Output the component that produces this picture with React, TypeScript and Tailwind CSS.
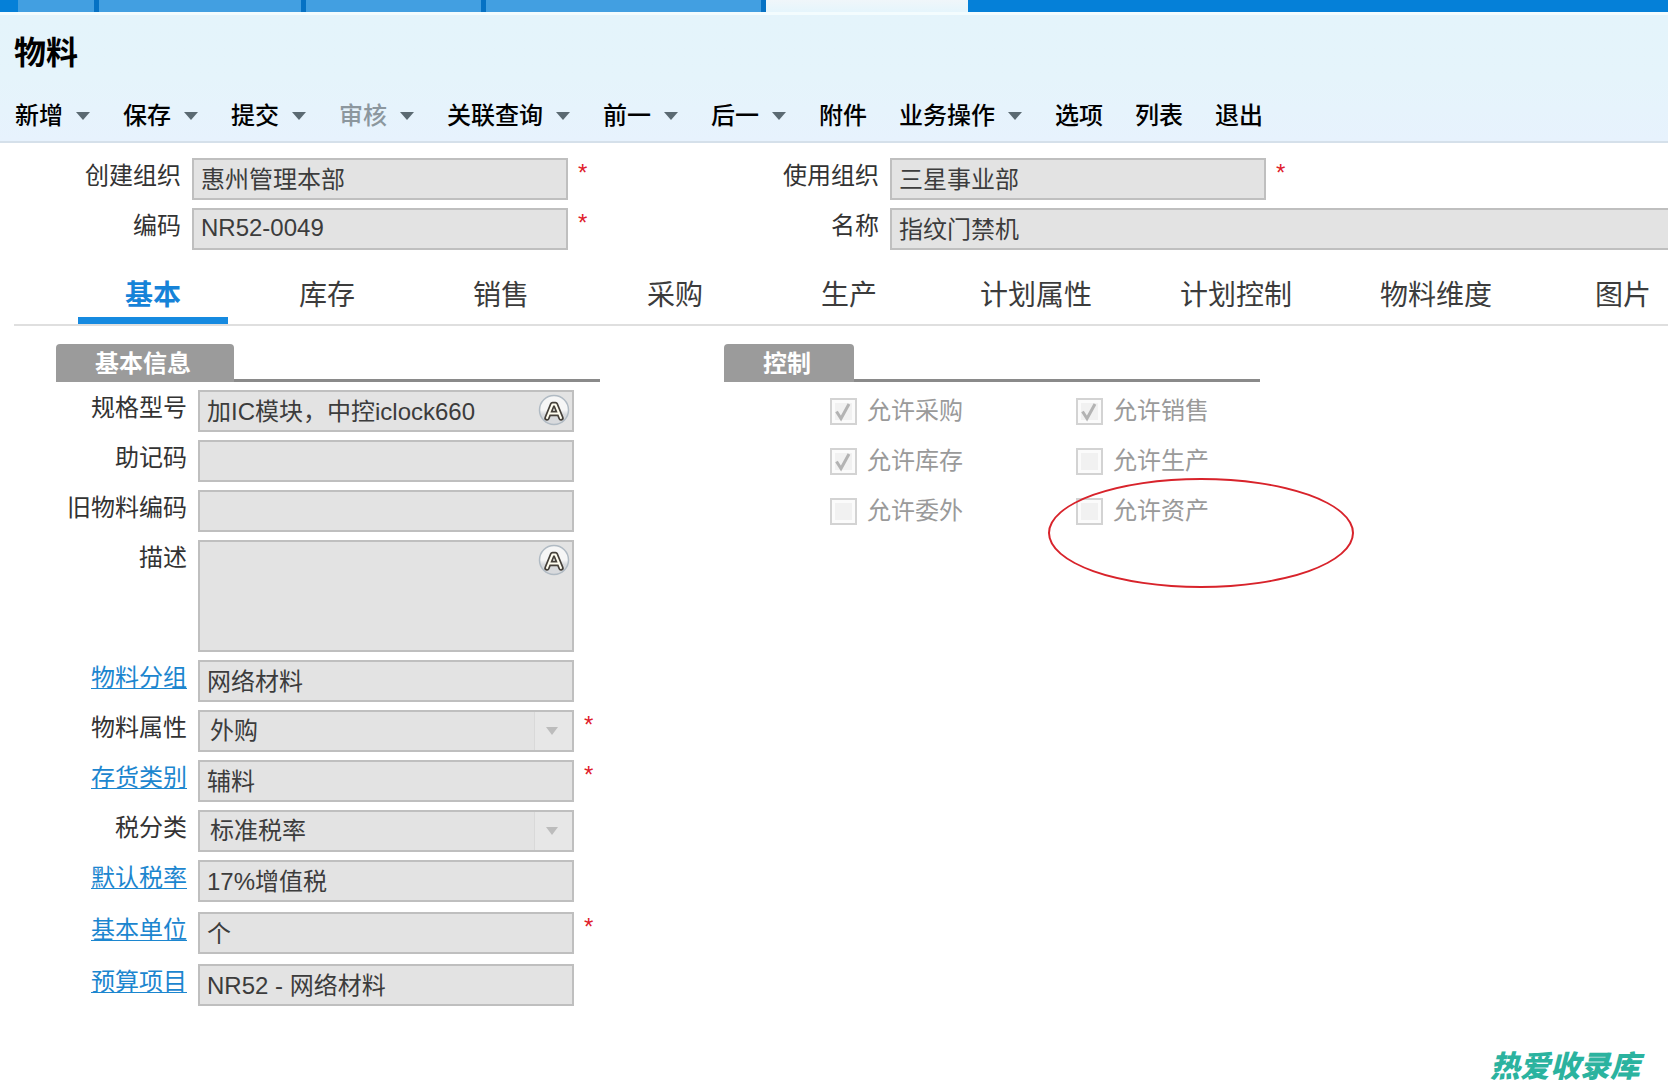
import type { ReactNode } from "react";

const FONT = "font-['Liberation_Sans','Noto_Sans_CJK_SC',sans-serif]";
const BOX = "w-full border-2 border-[#bfbfbf] bg-[#e3e3e3] text-2xl text-[#3c3c3c] outline-none";

type Action = { text: string; menu?: boolean; dim?: boolean };

const ACTIONS: Action[] = [
  { text: "新增", menu: true },
  { text: "保存", menu: true },
  { text: "提交", menu: true },
  { text: "审核", menu: true, dim: true },
  { text: "关联查询", menu: true },
  { text: "前一", menu: true },
  { text: "后一", menu: true },
  { text: "附件" },
  { text: "业务操作", menu: true },
  { text: "选项" },
  { text: "列表" },
  { text: "退出" },
];

const TABS = ["基本", "库存", "销售", "采购", "生产", "计划属性", "计划控制", "物料维度", "图片"];

const CHECKS = [
  { text: "允许采购", on: true },
  { text: "允许销售", on: true },
  { text: "允许库存", on: true },
  { text: "允许生产", on: false },
  { text: "允许委外", on: false },
  { text: "允许资产", on: false },
];

function WindowTabs() {
  return (
    <div className="flex h-3 bg-[#0580d8]">
      <div className="flex gap-[5px] bg-[#0672c4] pr-[5px]">
        <div className="-mr-[5px] w-[18px] bg-[#0580d8]" />
        <div className="w-[76px] bg-[#429fe1]" />
        <div className="w-[202px] bg-[#429fe1]" />
        <div className="w-[175px] bg-[#429fe1]" />
        <div className="w-[275px] bg-[#429fe1]" />
      </div>
      <div className="w-[202px] bg-gradient-to-b from-[#f0f6fa] to-[#e5f5fc]" />
    </div>
  );
}

function Toolbar() {
  return (
    <div className="flex h-[50px] items-center gap-8 pl-[15px]">
      {ACTIONS.map((a) => (
        <button
          key={a.text}
          type="button"
          disabled={a.dim}
          className={`flex shrink-0 items-center gap-[13px] text-2xl font-medium ${a.menu ? "pr-px" : ""} ${
            a.dim ? "text-[#8c979e]" : "text-black"
          }`}
        >
          {a.text}
          {a.menu && (
            <svg width="14" height="8" viewBox="0 0 14 8" aria-hidden="true">
              <path d="M0 0h14L7 8z" fill="#5b6a72" />
            </svg>
          )}
        </button>
      ))}
    </div>
  );
}

function Field(props: {
  id: string;
  label: string;
  link?: boolean;
  required?: boolean;
  labelClass: string;
  boxClass?: string;
  children: ReactNode;
}) {
  return (
    <div className="flex items-start">
      <label
        htmlFor={props.id}
        className={`${props.labelClass} mr-[11px] shrink-0 text-right text-2xl leading-9 text-[#333]`}
      >
        {props.link ? (
          <a href="#" className="text-[#1c86cf] underline decoration-1 underline-offset-2">
            {props.label}
          </a>
        ) : (
          props.label
        )}
      </label>
      <div className={`relative ${props.boxClass ?? "w-[376px]"}`}>{props.children}</div>
      {props.required && <span className="ml-[10px] text-2xl leading-[30px] text-[#e0202c]">*</span>}
    </div>
  );
}

function TextBox({ id, value, open }: { id: string; value: string; open?: boolean }) {
  return (
    <input
      id={id}
      readOnly
      defaultValue={value}
      className={`${BOX} block h-[42px] px-[7px] pb-[3px] ${open ? "border-r-0" : ""}`}
    />
  );
}

function SelectBox({ id, value }: { id: string; value: string }) {
  return (
    <>
      <select id={id} disabled className={`${BOX} block h-[42px] appearance-none pl-[10px] opacity-100`}>
        <option>{value}</option>
      </select>
      <span className="pointer-events-none absolute inset-y-[2px] right-[2px] flex w-[38px] items-center justify-center border-l border-[#d9d9d9] bg-[#e7e7e7] pr-1">
        <svg width="12" height="8" viewBox="0 0 12 8" aria-hidden="true">
          <path d="M0 0h12L6 8z" fill="#bcbcbc" />
        </svg>
      </span>
    </>
  );
}

function LanguageButton() {
  return (
    <button type="button" aria-label="多语言" className="absolute right-[4px] top-[4px]">
      <svg width="32" height="32" viewBox="0 0 32 32" aria-hidden="true">
        <defs>
          <linearGradient id="disc" x1="0" y1="0" x2="0" y2="1">
            <stop offset="0.5" stopColor="#f6f6f6" />
            <stop offset="0.65" stopColor="#d8dadd" />
          </linearGradient>
        </defs>
        <circle cx="16" cy="16" r="14.5" fill="url(#disc)" stroke="#b0bac3" strokeWidth="1.5" />
        <path d="M9 24 14.500 10.500h3L23 24M12 19.500h8" fill="none" stroke="#45403a" strokeWidth="5.500" strokeLinejoin="round" strokeLinecap="round" />
        <path d="M9 24 14.500 10.500h3L23 24M12 19.500h8" fill="none" stroke="#fffdf0" strokeWidth="2" strokeLinejoin="round" strokeLinecap="round" />
      </svg>
    </button>
  );
}

function SectionTitle({ text }: { text: string }) {
  return (
    <h2 className="flex border-b-[3px] border-[#8a8a8a]">
      <span className="-mb-[3px] rounded-t bg-[#9b9b9b] pl-[39px] pr-[43px] pt-0.5 text-2xl font-bold leading-9 text-white">
        {text}
      </span>
    </h2>
  );
}

function CheckItem({ text, on, id }: { text: string; on: boolean; id: string }) {
  return (
    <label htmlFor={id} className="flex h-[42px] items-center text-2xl text-[#9a9a9a]">
      <span className="relative mr-[10px] flex">
        <input
          id={id}
          type="checkbox"
          disabled
          defaultChecked={on}
          className="size-[27px] appearance-none border-2 border-[#d3d3d3] bg-[#f1f1f1] shadow-[inset_0_0_0_3px_#fbfbfb]"
        />
        {on && (
          <svg className="absolute inset-0" width="27" height="27" viewBox="0 0 27 27" aria-hidden="true">
            <path d="M6.500 13.500l4.500 7L19 6" fill="none" stroke="#b3b3b3" strokeWidth="3" />
          </svg>
        )}
      </span>
      {text}
    </label>
  );
}

export default function App() {
  return (
    <div className={`${FONT} flex min-h-screen flex-col overflow-x-hidden bg-white`}>
      <WindowTabs />
      <header className="border-b-2 border-[#d5e0ea] bg-gradient-to-b from-[#e4f4fb] via-[#e5f4fb] to-[#e7f2fd]">
        <div className="h-[3px] bg-[#f3fcfe]" />
        <h1 className="pl-[14px] pt-[14px] text-[32px] font-bold leading-[48px] text-black">物料</h1>
        <div className="pt-[14px]">
          <Toolbar />
        </div>
      </header>

      <main>
        <div className="grid grid-cols-[698px_1fr] gap-y-2 pt-[15px]">
          <Field id="createOrg" label="创建组织" required labelClass="w-[181px]">
            <TextBox id="createOrg" value="惠州管理本部" />
          </Field>
          <Field id="useOrg" label="使用组织" required labelClass="w-[181px]">
            <TextBox id="useOrg" value="三星事业部" />
          </Field>
          <Field id="code" label="编码" required labelClass="w-[181px]">
            <TextBox id="code" value="NR52-0049" />
          </Field>
          <Field id="name" label="名称" labelClass="w-[181px]" boxClass="flex-1">
            <TextBox id="name" value="指纹门禁机" open />
          </Field>
        </div>

        <nav className="ml-[14px] mt-[18px] flex gap-6 overflow-hidden border-b-2 border-[#dfdfdf] pl-16">
          {TABS.map((t, i) => (
            <button
              key={t}
              type="button"
              className={`h-14 shrink-0 border-b-[7px] pt-[7px] text-[28px] leading-[42px] ${
                t.length > 2 ? "w-[176px]" : "w-[150px]"
              } ${i === 0 ? "border-[#168ae0] font-bold text-[#1683d8]" : "border-transparent text-[#3c3c3c]"}`}
            >
              {t}
            </button>
          ))}
        </nav>

        <div className="flex pt-[18px]">
          <section className="w-[724px]">
            <div className="ml-14 w-[544px]">
              <SectionTitle text="基本信息" />
            </div>
            <div className="flex flex-col gap-2 pt-2">
              <Field id="spec" label="规格型号" labelClass="w-[187px]">
                <TextBox id="spec" value="加IC模块，中控iclock660" />
                <LanguageButton />
              </Field>
              <Field id="memo" label="助记码" labelClass="w-[187px]">
                <TextBox id="memo" value="" />
              </Field>
              <Field id="oldCode" label="旧物料编码" labelClass="w-[187px]">
                <TextBox id="oldCode" value="" />
              </Field>
              <Field id="desc" label="描述" labelClass="w-[187px]">
                <textarea id="desc" readOnly className={`${BOX} block h-28 resize-none`} />
                <LanguageButton />
              </Field>
              <Field id="group" label="物料分组" link labelClass="w-[187px]">
                <TextBox id="group" value="网络材料" />
              </Field>
              <Field id="attr" label="物料属性" required labelClass="w-[187px]">
                <SelectBox id="attr" value="外购" />
              </Field>
              <Field id="stock" label="存货类别" link required labelClass="w-[187px]">
                <TextBox id="stock" value="辅料" />
              </Field>
              <Field id="taxClass" label="税分类" labelClass="w-[187px]">
                <SelectBox id="taxClass" value="标准税率" />
              </Field>
              <Field id="taxRate" label="默认税率" link labelClass="w-[187px]">
                <TextBox id="taxRate" value="17%增值税" />
              </Field>
              <div className="flex flex-col gap-[10px] pt-[2px]">
                <Field id="unit" label="基本单位" link required labelClass="w-[187px]">
                  <TextBox id="unit" value="个" />
                </Field>
                <Field id="budget" label="预算项目" link labelClass="w-[187px]">
                  <TextBox id="budget" value="NR52 - 网络材料" />
                </Field>
              </div>
            </div>
          </section>

          <section className="relative w-[536px]">
            <SectionTitle text="控制" />
            <div className="grid grid-cols-[246px_1fr] gap-y-2 pl-[106px] pt-2">
              {CHECKS.map((c, i) => (
                <CheckItem key={c.text} id={`check${i}`} text={c.text} on={c.on} />
              ))}
            </div>
            <div className="pointer-events-none absolute left-[324px] top-[134px] h-[110px] w-[306px] rounded-[50%] border-2 border-[#d8232b]" />
          </section>
        </div>
      </main>

      <footer className="mt-auto pb-[3px] pr-7 text-right text-[30px] font-black italic leading-9 text-[#2bb39f]">
        热爱收录库
      </footer>
    </div>
  );
}
